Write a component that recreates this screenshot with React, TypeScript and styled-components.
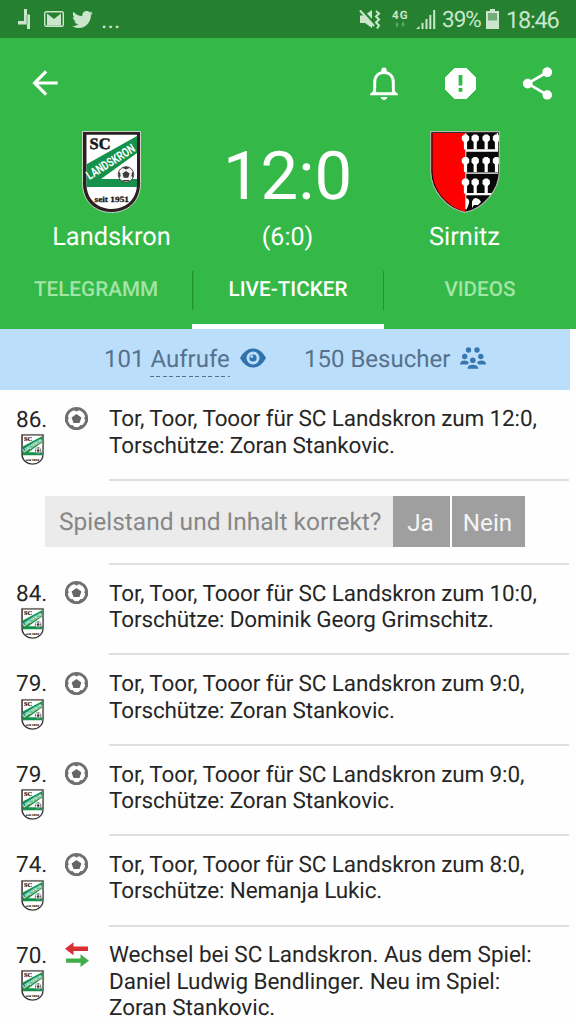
import React from "react";
import styled, { createGlobalStyle } from "styled-components";
import { FaTwitter } from "react-icons/fa";
import { MdArrowBack, MdShare } from "react-icons/md";

const GlobalStyle = createGlobalStyle`
  * { box-sizing: border-box; }
  body { margin: 0; background: #fefefe; font-family: Roboto, "Liberation Sans", sans-serif; text-rendering: geometricPrecision; }
  svg { display: block; flex: none; overflow: visible; }
`;

const Screen = styled.div`
  width: 576px;
  height: 1024px;
  overflow: hidden;
  background: #fefefe;
  color: #262626;
`;

const StatusBar = styled.div`
  height: 38px;
  background: #258130;
  color: #cbe6cd;
  display: flex;
  align-items: center;
  justify-content: space-between;
  padding: 0 17px 0 18px;
`;

const StatusGroup = styled.div`
  display: flex;
  align-items: center;
`;

const StatusSlot = styled.div<{ $width: number; $drop?: number }>`
  width: ${(p) => p.$width}px;
  padding-top: ${(p) => p.$drop ?? 0}px;
`;

const StatusText = styled.span<{ $width: number; $size?: number; $track?: number }>`
  width: ${(p) => p.$width}px;
  font-size: ${(p) => p.$size ?? 23}px;
  line-height: 38px;
  letter-spacing: ${(p) => p.$track ?? 0}px;
  padding-top: 2px;
  white-space: nowrap;
`;

const Header = styled.header`
  height: 291px;
  background: #34b847;
  color: #fff;
  display: flex;
  flex-direction: column;
`;

const AppBar = styled.div`
  height: 90px;
  display: flex;
  align-items: center;
  padding-left: 26px;
`;

const Actions = styled.div`
  margin-left: auto;
  display: flex;
  align-items: center;
`;

const ActionSlot = styled.div<{ $width: number }>`
  width: ${(p) => p.$width}px;
  display: flex;
  justify-content: center;
`;

const Match = styled.div`
  height: 123px;
  display: grid;
  grid-template-columns: 222px 131px 223px;
`;

const Side = styled.div<{ $shift: number }>`
  display: flex;
  flex-direction: column;
  align-items: center;
  padding-top: 3px;
  padding-left: ${(p) => p.$shift}px;
`;

const TeamName = styled.div`
  font-size: 25.4px;
  line-height: 30px;
  margin-top: 9px;
`;

const ScoreBox = styled.div`
  text-align: center;
  white-space: nowrap;
`;

const Score = styled.div`
  font-size: 67px;
  line-height: 80px;
  margin-top: 9px;
`;

const HalfTime = styled.div`
  font-size: 25px;
  line-height: 30px;
  margin-top: 6px;
`;

const Tabs = styled.nav`
  height: 78px;
  display: grid;
  grid-template-columns: repeat(3, 192px);
`;

const Tab = styled.div<{ $active?: boolean }>`
  font-size: 20.7px;
  font-weight: 500;
  line-height: 26px;
  text-align: center;
  padding-top: 26px;
  color: ${(p) => (p.$active ? "#fff" : "#a3e5a6")};
  border-bottom: 5px solid ${(p) => (p.$active ? "#fff" : "transparent")};
  background: ${(p) =>
    p.$active
      ? "linear-gradient(#21962f, #21962f) 0 20px / 1.5px 39px no-repeat, linear-gradient(#21962f, #21962f) 100% 20px / 1px 39px no-repeat"
      : "none"};
`;

const Stats = styled.div`
  width: 570px;
  height: 61px;
  background: #bbdefb;
  color: #56718d;
  display: flex;
  align-items: center;
  padding: 0 0 1px 104px;
  font-size: 24px;
  line-height: 36px;
`;

const Stat = styled.div<{ $width: number; $gap: number }>`
  width: ${(p) => p.$width}px;
  height: 36px;
  display: flex;
  align-items: center;
  gap: ${(p) => p.$gap}px;
`;

const StatIcon = styled.span`
  padding-bottom: 2px;
`;

const Dashed = styled.span`
  display: inline-block;
  height: 36px;
  background: repeating-linear-gradient(90deg, #56718d 0 4px, transparent 4px 6.5px) 0 100% / 100% 1.5px no-repeat;
`;

const Ticker = styled.main`
  width: 570px;
  padding-top: 0.6px;
`;

const Row = styled.article`
  display: grid;
  grid-template-columns: 64px 45px 460px;
  min-height: 90.4px;
`;

const MinuteCol = styled.div`
  padding: 15px 0 0 16px;
`;

const Minute = styled.div`
  font-size: 22.5px;
  line-height: 28px;
  margin-bottom: 0.5px;
`;

const BadgeWrap = styled.div`
  padding-left: 5px;
`;

const IconCol = styled.div`
  padding-top: 15.5px;
`;

const Message = styled.div<{ $track: number }>`
  padding: 15.9px 0 18.7px;
  font-size: 22.5px;
  line-height: 26.4px;
  letter-spacing: ${(p) => p.$track}px;
  white-space: nowrap;
  border-bottom: 2px solid #dfdfdf;
`;

const Confirm = styled.div`
  height: 84px;
  display: flex;
  padding: 15.4px 0 0 45px;
  background: linear-gradient(#dfdfdf, #dfdfdf) 109px 100% / 460px 2px no-repeat;
`;

const Question = styled.div`
  width: 348px;
  height: 51px;
  padding-left: 14px;
  background: #ebebeb;
  color: #878787;
  font-size: 24.5px;
  line-height: 51px;
  white-space: nowrap;
`;

const Answer = styled.button<{ $width: number }>`
  width: ${(p) => p.$width}px;
  height: 51px;
  margin-right: 2px;
  padding: 2px 2px 0 0;
  border: 0;
  background: #9f9f9f;
  color: #f4f4f4;
  font: 24.2px Roboto, sans-serif;
`;

const LandskronCrest = ({ width, height }: { width: number; height: number }) => (
  <svg width={width} height={height} viewBox="0 0 59 82" preserveAspectRatio="none">
    <path d="M.5.5h58v52C58.500 71 45 81.500 29.500 81.500S.5 71 .5 52.500Z" fill="#2c2022" stroke="#c9d6c4" strokeWidth="1" />
    <path d="M4.500 3.800h50.500v49C55 69 43 78 29.700 78S4.500 69 4.500 53Z" fill="#fff" />
    <path d="M4.500 33.300 55 5v17L19 48h36v8H4.500Z" fill="#14924b" />
    <text x="7.500" y="18" textLength="21" lengthAdjust="spacingAndGlyphs" fontFamily="Liberation Serif" fontWeight="700" fontSize="16" fill="#171717" stroke="#171717" strokeWidth=".5">SC</text>
    <text transform="translate(7.500 49) rotate(-32)" textLength="55" lengthAdjust="spacingAndGlyphs" fontFamily="Roboto" fontWeight="700" fontSize="12.500" fill="#fff">LANDSKRON</text>
    <circle cx="44" cy="43.500" r="7.800" fill="#f3f3f3" stroke="#3b3b3b" strokeWidth=".9" />
    <path d="m44 40 3.600 2.600-1.400 4.200h-4.400l-1.400-4.200ZM40 36.800l4-1 4 1-4 1.700ZM36.400 42l1.600-1 .6 4-1.200 2ZM51.600 42l-1.600-1-.6 4 1.200 2ZM40 50.300l1.200-1.400h5.600l1.200 1.400Z" fill="#3b3b3b" />
    <text x="12.500" y="70.500" textLength="34.500" lengthAdjust="spacingAndGlyphs" fontFamily="Liberation Serif" fontWeight="700" fontSize="8" fill="#171717" stroke="#171717" strokeWidth=".3">seit 1951</text>
  </svg>
);

const sirnitzOutline = "M.7.700h68.600v40C69.300 59 53 78 35 81.300 17 78 .7 60 .7 40Z";

const Figure = ({ x, y }: { x: number; y: number }) => (
  <path transform={`translate(${x} ${y})`} d="M-1.500 0h3l2.200 2v3.500L1.600 7.500V15h-3.200V7.500L-3.700 5.500V2Z" fill="#fff" />
);

const SirnitzCrest = () => (
  <svg width="70" height="82" viewBox="0 0 70 82">
    <clipPath id="sirnitz"><path d={sirnitzOutline} /></clipPath>
    <g clipPath="url(#sirnitz)">
      <path d="M0 0h70v82H0Z" fill="#080808" />
      <path d="M2.500 2h33v79C17 76 2.500 59 2.500 40Z" fill="#fe0000" />
      <path d="M36 18.300h32v2.500H36ZM36 41.500h32v1.300H36ZM36 62h28v2.200H36ZM66.700 2h1.300v18h-1.300ZM35.300 2h1v76h-1Z" fill="#fff" />
      {[3.5, 26, 47.5].map((y, r) => (
        <g key={y}>
          {[35.5, 45.2, 56.2, 66.5].slice(0, r === 2 ? 3 : 4).map((x) => <Figure key={x} x={x} y={y} />)}
        </g>
      ))}
      <path d="M36 67q4 1 3 5t-3 7ZM46 67q4 1 5 4l-3 3h-4l-2 3v-6q1-4 4-4Z" fill="#fff" />
    </g>
    <path d={sirnitzOutline} fill="none" stroke="#b4b7ac" strokeWidth="1.200" />
  </svg>
);

const BallIcon = () => (
  <svg width="25" height="25" viewBox="0 0 25 25">
    <circle cx="12.500" cy="12.500" r="10.200" fill="#fff" stroke="#707070" strokeWidth="2.800" />
    <path d="m12.500 7.900 4.900 3.500-1.900 5.700h-6l-1.900-5.700Z" fill="#666" />
    <path d="m8 2.500 4.500 2.500L17 2.500ZM22.500 8l-1.800 4.500 2.800 3.500ZM2.500 8l1.800 4.500-2.800 3.500ZM5 19.500l4 .3 1.500 3.500ZM20 19.500l-4 .3-1.500 3.500Z" fill="#707070" stroke="#707070" strokeWidth="1" />
  </svg>
);

const SwapIcon = () => (
  <svg width="26" height="28" viewBox="0 0 26 28">
    <path d="M1 6.800 9.500.300V4.600H24v4.400H9.500v4.300Z" fill="#d92e33" />
    <path d="M25 18.800 16.500 12.300v4.300H2v4.200h14.500v4.200Z" fill="#41ad4b" />
  </svg>
);

const BellIcon = () => (
  <svg width="28" height="33" viewBox="0 0 28 33">
    <path d="M4.700 27V15.500C4.700 9 8.700 5.500 14 5.500s9.300 3.500 9.300 10V27" fill="none" stroke="#fff" strokeWidth="3" />
    <path d="M11.300 5V3.200a2.700 2.700 0 0 1 5.400 0V5Z" fill="#fff" />
    <path d="M0 28.200v-1l3.300-3.400h21.400l3.300 3.400v1Z" fill="#fff" />
    <path d="M6.200 21h15.600v4.200H6.200Z" fill="#34b847" />
    <path d="M10.500 30h7q-1 3-3.500 3t-3.500-3Z" fill="#fff" />
  </svg>
);

const AlertIcon = () => (
  <svg width="31" height="31" viewBox="0 0 31 31">
    <path d="M9.500.500h12l9 9v12l-9 9h-12l-9-9v-12Z" fill="#fff" stroke="#fff" strokeLinejoin="round" />
    <path d="M13.600 7h3.800v10.500h-3.800ZM13.600 20h3.800v3.800h-3.800Z" fill="#34b847" />
  </svg>
);

const EyeIcon = () => (
  <svg width="26" height="20" viewBox="0 0 26 20">
    <path d="M0 10Q5 .5 13 .5T26 10q-5 9.500-13 9.500T0 10Z" fill="#2f72ac" />
    <circle cx="13" cy="10" r="6.500" fill="#bbdefb" />
    <circle cx="13" cy="10" r="3.600" fill="#2f72ac" />
    <circle cx="11.800" cy="8.600" r="1.400" fill="#bbdefb" />
  </svg>
);

const VisitorsIcon = () => (
  <svg width="26" height="22" viewBox="0 0 26 22" fill="#3a76b0">
    <circle cx="8.500" cy="3" r="2.700" /><circle cx="17" cy="3" r="2.700" />
    <circle cx="4.700" cy="9.500" r="2.700" /><circle cx="20.800" cy="9.500" r="2.700" />
    <circle cx="12.800" cy="13.300" r="2.800" />
    <path d="M0 17.500q0-3.900 4.700-3.900 3 0 4.300 2l-1.500 1.900ZM26 17.500q0-3.900-4.700-3.900-3 0-4.300 2l1.500 1.900ZM7.500 21.700q0-4 5.300-4t5.500 4Z" />
  </svg>
);

const MailIcon = () => (
  <svg width="20" height="16" viewBox="0 0 20 16">
    <rect x=".7" y=".7" width="18.600" height="14.600" rx="1.500" fill="#258130" stroke="#cbe6cd" strokeWidth="1.400" />
    <path d="M3 14.500V2.500l7 5.500 7-5.500v12Z" fill="#cbe6cd" />
  </svg>
);

const SeatIcon = () => (
  <svg width="13" height="20" viewBox="0 0 13 20" fill="#cbe6cd">
    <path d="M6 0h3v5.500h3V20H9v-4.500H0V12h6Z" />
    <path d="M9 6v9.500" stroke="#258130" strokeWidth=".6" />
  </svg>
);

const MutedIcon = () => (
  <svg width="22" height="21" viewBox="0 0 22 21" fill="#cbe6cd">
    <path d="M1 6.500h4L13 1v18l-7-5H1Z" />
    <path d="M2.500.3 15.500 14.500" stroke="#258130" strokeWidth="2.500" />
    <path d="m1 1.500 14 15.500" stroke="#cbe6cd" strokeWidth="2" />
    <path d="m17 2 3 2.500-3 3 3 3-3 3 3 3-2 3" fill="none" stroke="#cbe6cd" strokeWidth="2" />
  </svg>
);

const NetworkIcon = () => (
  <svg width="16" height="20" viewBox="0 0 16 20">
    <text x="0" y="9.500" textLength="15.500" fontFamily="Roboto" fontWeight="700" fontSize="11.500" fill="#cbe6cd">4G</text>
    <path d="m5 13 2 2.500H6V18H4v-2.500H3ZM11 18l-2-2.500h1V13h2v2.500h1Z" fill="#60a568" />
  </svg>
);

const SignalIcon = () => (
  <svg width="20" height="19" viewBox="0 0 20 19" fill="#cbe6cd">
    <path d="M0 19l3.500-3v3ZM5.500 13h2v6h-2ZM9.500 9h2v10h-2ZM13.300 5h2v14h-2ZM17.200 0h2v19h-2Z" />
  </svg>
);

const BatteryIcon = () => (
  <svg width="13" height="20" viewBox="0 0 13 20">
    <path d="M4 0h5v2h4v18H0V2h4Z" fill="#cbe6cd" />
    <path d="M2 4h9v7.500H2Z" fill="#72ad77" />
  </svg>
);

type Entry = { minute: string; icon: "goal" | "swap"; lines: string[] };

const latest: Entry = { minute: "86.", icon: "goal", lines: ["Tor, Toor, Tooor für SC Landskron zum 12:0,", "Torschütze: Zoran Stankovic."] };

const earlier: Entry[] = [
  { minute: "84.", icon: "goal", lines: ["Tor, Toor, Tooor für SC Landskron zum 10:0,", "Torschütze: Dominik Georg Grimschitz."] },
  { minute: "79.", icon: "goal", lines: ["Tor, Toor, Tooor für SC Landskron zum 9:0,", "Torschütze: Zoran Stankovic."] },
  { minute: "79.", icon: "goal", lines: ["Tor, Toor, Tooor für SC Landskron zum 9:0,", "Torschütze: Zoran Stankovic."] },
  { minute: "74.", icon: "goal", lines: ["Tor, Toor, Tooor für SC Landskron zum 8:0,", "Torschütze: Nemanja Lukic."] },
  { minute: "70.", icon: "swap", lines: ["Wechsel bei SC Landskron. Aus dem Spiel:", "Daniel Ludwig Bendlinger. Neu im Spiel:", "Zoran Stankovic."] },
];

const TickerRow = ({ entry }: { entry: Entry }) => (
  <Row>
    <MinuteCol>
      <Minute>{entry.minute}</Minute>
      <BadgeWrap><LandskronCrest width={23} height={31} /></BadgeWrap>
    </MinuteCol>
    <IconCol>{entry.icon === "goal" ? <BallIcon /> : <SwapIcon />}</IconCol>
    <Message $track={entry.icon === "goal" ? -0.13 : -0.05}>
      {entry.lines.map((line) => <div key={line}>{line}</div>)}
    </Message>
  </Row>
);

export default function App() {
  return (
    <Screen>
      <GlobalStyle />
      <StatusBar>
        <StatusGroup>
          <StatusSlot $width={26}><SeatIcon /></StatusSlot>
          <StatusSlot $width={28}><MailIcon /></StatusSlot>
          <StatusSlot $width={29}><FaTwitter size={21} /></StatusSlot>
          <StatusText $width={22} $size={24} $track={0.2}>...</StatusText>
        </StatusGroup>
        <StatusGroup>
          <StatusSlot $width={33}><MutedIcon /></StatusSlot>
          <StatusSlot $width={24}><NetworkIcon /></StatusSlot>
          <StatusSlot $width={26} $drop={1}><SignalIcon /></StatusSlot>
          <StatusText $width={44} $size={22.5} $track={-1}>39%</StatusText>
          <StatusSlot $width={20}><BatteryIcon /></StatusSlot>
          <StatusText $width={53} $size={23.5} $track={-1.2}>18:46</StatusText>
        </StatusGroup>
      </StatusBar>
      <Header>
        <AppBar>
          <MdArrowBack size={38} />
          <Actions>
            <ActionSlot $width={77}><BellIcon /></ActionSlot>
            <ActionSlot $width={77}><AlertIcon /></ActionSlot>
            <ActionSlot $width={77}><MdShare size={39} /></ActionSlot>
          </Actions>
        </AppBar>
        <Match>
          <Side $shift={1}>
            <LandskronCrest width={59} height={82} />
            <TeamName>Landskron</TeamName>
          </Side>
          <ScoreBox>
            <Score>12:0</Score>
            <HalfTime>(6:0)</HalfTime>
          </ScoreBox>
          <Side $shift={0}>
            <SirnitzCrest />
            <TeamName>Sirnitz</TeamName>
          </Side>
        </Match>
        <Tabs>
          <Tab>TELEGRAMM</Tab>
          <Tab $active>LIVE-TICKER</Tab>
          <Tab>VIDEOS</Tab>
        </Tabs>
      </Header>
      <Stats>
        <Stat $width={200} $gap={10}><span>101 <Dashed>Aufrufe</Dashed></span><StatIcon><EyeIcon /></StatIcon></Stat>
        <Stat $width={200} $gap={10}><span>150 Besucher</span><StatIcon><VisitorsIcon /></StatIcon></Stat>
      </Stats>
      <Ticker>
        <TickerRow entry={latest} />
        <Confirm>
          <Question>Spielstand und Inhalt korrekt?</Question>
          <Answer $width={57}>Ja</Answer>
          <Answer $width={73}>Nein</Answer>
        </Confirm>
        {earlier.map((entry, i) => <TickerRow key={i} entry={entry} />)}
      </Ticker>
    </Screen>
  );
}
